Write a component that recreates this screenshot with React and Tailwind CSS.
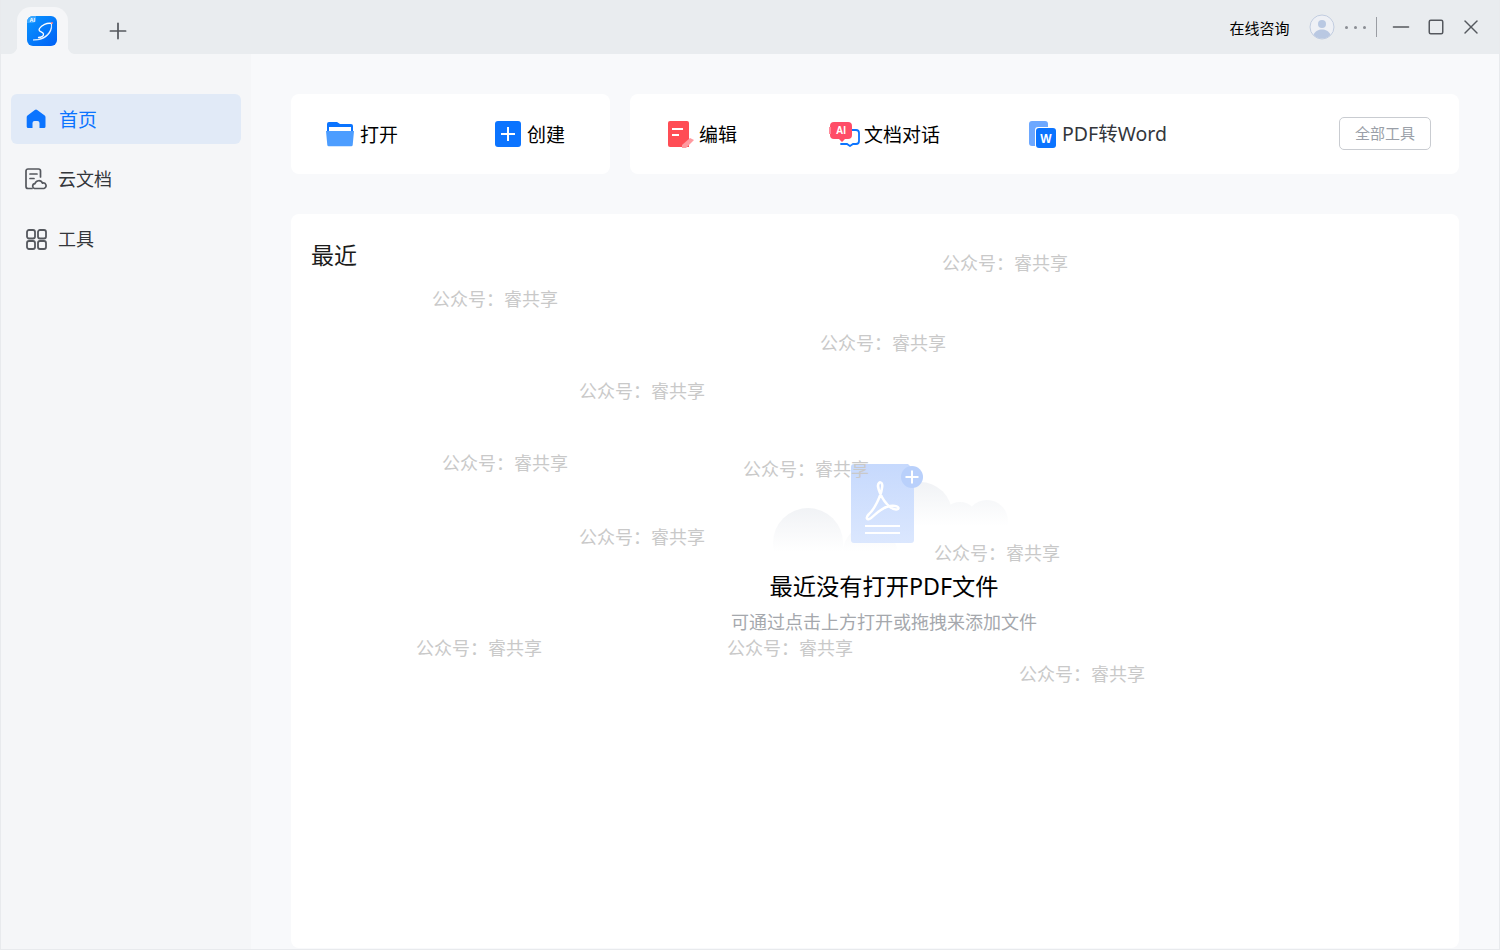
import { Minus, Plus, Square, X } from "lucide-react";

const font = { fontFamily: '"Noto Sans", "Noto Sans CJK SC", sans-serif' };

const marks = [
  [943, 252], [433, 288], [821, 332], [580, 380], [443, 452], [744, 458],
  [580, 526], [935, 542], [417, 637], [728, 637], [1020, 663],
];

const Logo = () => (
  <svg width="30" height="30" viewBox="0 0 30 30">
    <defs>
      <linearGradient id="logo" x1="0" y1="0" x2="1" y2="1">
        <stop offset="0" stopColor="#0a96ff" />
        <stop offset="1" stopColor="#0060f5" />
      </linearGradient>
    </defs>
    <rect width="30" height="30" rx="6" fill="url(#logo)" />
    <path d="M0 7V6a6 6 0 0 1 6-6h3v3a4 4 0 0 1-4 4z" fill="#3ea8ff" />
    <text x="2.500" y="6" fontSize="5.500" fontWeight="700" fill="#fff" fontFamily="Liberation Sans">AI</text>
    <path d="M24.500 7.500C20 6.500 14.500 9 12.500 12.500 10.500 16 16 15.500 16.500 18 17 20.500 13.500 21.500 11.500 21.500" fill="none" stroke="#fff" strokeWidth="1.300" strokeLinecap="round" />
    <path d="M24.500 8C25 15 19 23.500 6 24 17 25 26 18 24.500 8z" fill="#fff" stroke="#fff" strokeWidth=".6" strokeLinejoin="round" />
    <circle cx="25" cy="7" r="1" fill="#ff7a7a" />
  </svg>
);

const HomeIcon = () => (
  <svg width="20" height="20" viewBox="0 0 20 20">
    <path d="M8.800 .9a2 2 0 0 1 2.400 0l7.500 5.700a2 2 0 0 1 .8 1.600V17.500a1.500 1.500 0 0 1-1.500 1.500H13.500V14a2 2 0 0 0-2-2h-3a2 2 0 0 0-2 2v5H2.200a1.500 1.500 0 0 1-1.500-1.500V8.200a2 2 0 0 1 .8-1.600z" fill="#0b74ff" />
  </svg>
);

const CloudDocIcon = () => (
  <svg width="22" height="22" viewBox="0 0 22 22" fill="none" stroke="#55585e" strokeWidth="1.700" strokeLinecap="round" strokeLinejoin="round">
    <path d="M7 20.500H3a2 2 0 0 1-2-2V3a2 2 0 0 1 2-2h10.500a2 2 0 0 1 2 2v6" />
    <path d="M5 6h7M5 10.500h4" />
    <path d="M9.500 20.500a2.500 2.500 0 0 1 .5-4.900 4 4 0 0 1 7.500-.5 2.800 2.800 0 0 1 1.500 5.400z" />
  </svg>
);

const ToolsIcon = () => (
  <svg width="21" height="21" viewBox="0 0 21 21" fill="none" stroke="#55585e" strokeWidth="1.800">
    <rect x="1" y="1" width="8" height="8.500" rx="2" />
    <rect x="12" y="1" width="8" height="8.500" rx="2" />
    <rect x="1" y="12" width="8" height="8" rx="2" />
    <rect x="12" y="12" width="8" height="8" rx="2" />
  </svg>
);

const FolderIcon = () => (
  <svg width="30" height="26" viewBox="0 0 30 26">
    <path d="M2 3a2 2 0 0 1 2-2h8l3 2h11a2 2 0 0 1 2 2v7H2z" fill="#0b74ff" />
    <rect x="4" y="6" width="22" height="5" fill="#fff" />
    <path d="M1 10h28l-1.300 14a1.500 1.500 0 0 1-1.500 1.300H3.800a1.500 1.500 0 0 1-1.500-1.300z" fill="#4c9dff" />
  </svg>
);

const CreateIcon = () => (
  <svg width="26" height="26" viewBox="0 0 26 26">
    <rect width="26" height="26" rx="3" fill="#0b74ff" />
    <path d="M13 6v14M6 13h14" stroke="#fff" strokeWidth="2" />
  </svg>
);

const EditIcon = () => (
  <svg width="26" height="27" viewBox="0 0 26 27">
    <path d="M2 0h17a2 2 0 0 1 2 2v24H2a2 2 0 0 1-2-2V2a2 2 0 0 1 2-2z" fill="#ff4d55" />
    <path d="M4 8h11" stroke="#fff" strokeWidth="2" />
    <path d="M4 14h7" stroke="#fff" strokeWidth="2" />
    <path d="M14 24l8-7 4 2-8 8h-4z" fill="#ff9aa0" />
  </svg>
);

const ChatIcon = () => (
  <svg width="31" height="26" viewBox="0 0 31 26">
    <path d="M23 9h4a3 3 0 0 1 3 3v8a3 3 0 0 1-3 3h-3l-3 2-3-2h-6" fill="none" stroke="#0b74ff" strokeWidth="1.800" strokeLinecap="round" />
    <path d="M5 1h14a4 4 0 0 1 4 4v9a4 4 0 0 1-4 4h-3l-3 3-3-3H5a4 4 0 0 1-4-4V5a4 4 0 0 1 4-4z" fill="#ff4d67" />
    <rect x="0" y="6" width="2" height="7" fill="#ff8a9a" />
    <text x="12" y="13" textAnchor="middle" fontSize="10" fontWeight="700" fill="#fff" fontFamily="Liberation Sans">AI</text>
  </svg>
);

const WordIcon = () => (
  <svg width="27" height="27" viewBox="0 0 27 27">
    <rect x="0" y="0" width="19" height="25" rx="3" fill="#6da8ff" />
    <rect x="6" y="6" width="21" height="21" rx="3" fill="#fff" />
    <rect x="7" y="7" width="20" height="20" rx="3" fill="#0b74ff" />
    <text x="17" y="22" textAnchor="middle" fontSize="12" fontWeight="700" fill="#fff" fontFamily="Liberation Sans">W</text>
  </svg>
);

const EmptyArt = () => (
  <svg width="240" height="92" viewBox="0 0 240 92">
    <defs>
      <linearGradient id="cloudL" gradientUnits="userSpaceOnUse" x1="0" y1="46" x2="0" y2="92">
        <stop offset="0" stopColor="#f0f2f5" />
        <stop offset="1" stopColor="#ffffff" />
      </linearGradient>
      <linearGradient id="cloudR" gradientUnits="userSpaceOnUse" x1="0" y1="20" x2="0" y2="66">
        <stop offset="0" stopColor="#f0f2f5" />
        <stop offset="1" stopColor="#ffffff" />
      </linearGradient>
      <linearGradient id="doc" x1="0" y1="0" x2="0" y2="1">
        <stop offset="0" stopColor="#c6d9fd" />
        <stop offset="1" stopColor="#dbe7fe" />
      </linearGradient>
    </defs>
    <g fill="url(#cloudL)">
      <circle cx="38" cy="83" r="35" />
      <circle cx="100" cy="92" r="27" />
    </g>
    <g fill="url(#cloudR)">
      <circle cx="150" cy="54" r="32" />
      <circle cx="190" cy="60" r="18" />
      <circle cx="217" cy="61" r="21" />
    </g>
    <path d="M84 4h54l6 6v70a3 3 0 0 1-3 3H84a3 3 0 0 1-3-3V7a3 3 0 0 1 3-3z" fill="url(#doc)" />
    <path d="M110 33C108 28 107 25 109 23 111 21 113 24 112 28 111 36 104 50 99 54 95 58 97 61 101 58 106 54 112 47 120 46 125 45 130 47 128 49 125 51 116 47 110 33Z" fill="none" stroke="#fff" strokeWidth="2.500" strokeLinejoin="round" />
    <path d="M95 66h35M95 73h35" stroke="#fff" strokeWidth="2.200" />
    <circle cx="142" cy="17" r="11" fill="#b9d0fb" />
    <path d="M142 10.500v13M135.500 17h13" stroke="#fff" strokeWidth="2" />
  </svg>
);

const Tool = ({ icon, label, className }) => (
  <div className={`flex items-center ${className}`}>
    {icon}
    <span className="mt-[2px] text-[19px] leading-none text-black">{label}</span>
  </div>
);

export default function App() {
  return (
    <div style={font} className="relative flex h-[950px] w-[1500px] flex-col overflow-hidden border-x border-b border-[#e8eaed] bg-[#f8f9fb]">
      <header className="flex h-[54px] shrink-0 items-center bg-[#e9ecef]">
        <div className="relative ml-[16px] mt-[7px] flex h-[47px] w-[51px] items-start justify-center rounded-t-[14px] bg-[#f5f6f8] pr-px pt-[9px]">
          <svg className="absolute bottom-0 -left-[6px]" width="7" height="9" viewBox="0 0 7 9">
            <path d="M7 0v9H0C4 8 6 5 7 0z" fill="#f5f6f8" />
          </svg>
          <svg className="absolute bottom-0 -right-[6px]" width="7" height="9" viewBox="0 0 7 9">
            <path d="M0 0v9h7C3 8 1 5 0 0z" fill="#f5f6f8" />
          </svg>
          <Logo />
        </div>
        <Plus className="ml-[37px] mt-[8px] h-[26px] w-[26px] text-[#55585e]" strokeWidth={1.600} />
        <div className="ml-auto flex items-center pr-[10.500px]">
          <span className="mt-[2px] text-[15px] leading-none text-black">在线咨询</span>
          <svg className="ml-[19px]" width="26" height="26" viewBox="0 0 26 26">
            <circle cx="13" cy="13" r="12" fill="#eef0f5" stroke="#c2cde0" strokeWidth="1" />
            <circle cx="13" cy="10" r="4" fill="#b9c8e2" />
            <path d="M4.500 21c1.500-4 5-5.500 8.500-5.500s7 1.500 8.500 5.500a12 12 0 0 1-17 0z" fill="#b9c8e2" />
          </svg>
          <span className="ml-[10px] flex gap-[6px]">
            <i className="h-[3px] w-[3px] rounded-full bg-[#8a8d93]" />
            <i className="h-[3px] w-[3px] rounded-full bg-[#8a8d93]" />
            <i className="h-[3px] w-[3px] rounded-full bg-[#8a8d93]" />
          </span>
          <span className="ml-[10px] h-5 w-px bg-[#9a9da3]" />
          <span className="ml-[7px] flex w-[35px] justify-center">
            <Minus className="h-[26px] w-[26px] text-[#55585e]" strokeWidth={1.300} />
          </span>
          <span className="flex w-[35px] justify-center">
            <Square className="h-[18px] w-[18px] text-[#55585e]" strokeWidth={2} />
          </span>
          <span className="flex w-[35px] justify-center">
            <X className="h-[24px] w-[24px] text-[#55585e]" strokeWidth={1.400} />
          </span>
        </div>
      </header>

      <div className="flex min-h-0 flex-1">
        <aside className="w-[250px] shrink-0 bg-[#f5f6f8] pl-[10px] pt-10">
          <div className="flex h-[50px] w-[230px] items-center rounded-md bg-[#e1eaf7] pl-[15px]">
            <HomeIcon />
            <span className="ml-[13px] mt-[2px] text-[19px] leading-none text-[#0b74ff]">首页</span>
          </div>
          <div className="mt-[10px] flex h-[50px] w-[230px] items-center pl-[14px]">
            <CloudDocIcon />
            <span className="ml-[11px] text-[18px] leading-none text-[#33363b]">云文档</span>
          </div>
          <div className="mt-[10px] flex h-[50px] w-[230px] items-center pl-[15px]">
            <ToolsIcon />
            <span className="ml-[11px] text-[18px] leading-none text-[#33363b]">工具</span>
          </div>
        </aside>

        <main className="flex min-w-0 flex-1 flex-col pl-10 pr-10 pt-10">
          <div className="flex h-20 shrink-0 gap-5">
            <div className="flex w-[319px] items-center rounded-lg bg-white">
              <Tool icon={<FolderIcon />} label="打开" className="ml-[34px] gap-[5px]" />
              <Tool icon={<CreateIcon />} label="创建" className="ml-[97px] gap-[6px]" />
            </div>
            <div className="flex flex-1 items-center rounded-lg bg-white">
              <Tool icon={<EditIcon />} label="编辑" className="ml-[38px] gap-[5px]" />
              <Tool icon={<ChatIcon />} label="文档对话" className="ml-[92px] gap-[4px]" />
              <div className="ml-[89px] flex items-center gap-[6px]">
                <WordIcon />
                <span className="text-[19.500px] leading-none text-[#33363b]">PDF转Word</span>
              </div>
              <button className="mb-[2px] ml-auto mr-[28px] flex h-[33px] w-[92px] items-center justify-center rounded-[5px] border border-[#c9ccd1] text-[15px] text-[#9a9fa8]">
                全部工具
              </button>
            </div>
          </div>

          <section className="mb-px mt-10 flex flex-1 flex-col items-center rounded-lg bg-white pl-[18px]">
            <h2 className="-ml-[18px] self-start pl-[20px] pt-[26px] text-[23px] font-normal leading-[30px] text-[#1c1c1c]">最近</h2>
            <div className="mt-[190px] translate-x-[6px]">
              <EmptyArt />
            </div>
            <p className="mt-[18px] text-[23.250px] leading-[32px] text-black">最近没有打开PDF文件</p>
            <p className="mt-[7px] text-[18px] leading-[26px] text-[#a5a8ad]">可通过点击上方打开或拖拽来添加文件</p>
          </section>
        </main>
      </div>

      {marks.map(([x, y]) => (
        <span
          key={`${x}-${y}`}
          style={{ left: x - 2, top: y - 1 }}
          className="absolute whitespace-nowrap text-[18px] leading-[24px] text-[#c9c9c9]"
        >
          {"公众号\uFF1A睿共享"}
        </span>
      ))}
    </div>
  );
}
